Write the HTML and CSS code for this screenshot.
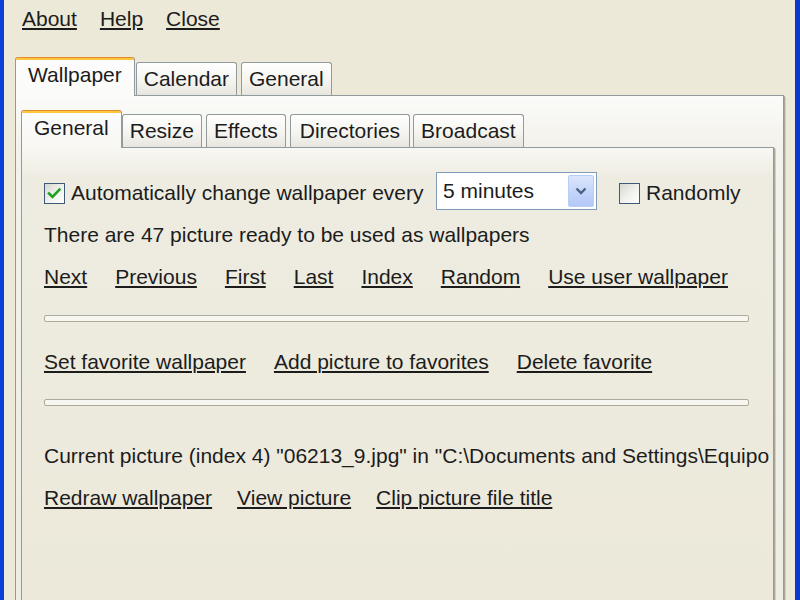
FILE: index.html
```html
<!DOCTYPE html>
<html>
<head>
<meta charset="utf-8">
<title>Wallpaper settings</title>
<link rel="stylesheet" href="styles.css">
</head>
<body>
<div class="window">
  <nav class="menu">
    <a class="link">About</a>
    <a class="link">Help</a>
    <a class="link">Close</a>
  </nav>
  <div class="outer">
    <div class="tabs outer-tabs">
      <div class="tab active">Wallpaper</div>
      <div class="tab">Calendar</div>
      <div class="tab">General</div>
    </div>
    <div class="panel outer-panel">
      <div class="tabs inner-tabs">
        <div class="tab active">General</div>
        <div class="tab">Resize</div>
        <div class="tab">Effects</div>
        <div class="tab wide">Directories</div>
        <div class="tab">Broadcast</div>
      </div>
      <div class="panel inner-panel">
        <div class="auto-row">
          <label class="check first">
            <span class="cb">
              <svg width="15" height="13" viewBox="0 0 15 13"><path d="M2 6.5 L5.5 10 L12.5 2.5" fill="none" stroke="#21A121" stroke-width="2.6" stroke-linecap="square"/></svg>
            </span>
            <span>Automatically change wallpaper every</span>
          </label>
          <div class="combo">
            <span>5 minutes</span>
            <span class="combo-btn">
              <svg width="12" height="8" viewBox="0 0 12 8"><path d="M1.5 1.5 L6 6 L10.5 1.5" fill="none" stroke="#4D6185" stroke-width="2.4"/></svg>
            </span>
          </div>
          <label class="check random">
            <span class="cb"></span>
            <span>Randomly</span>
          </label>
        </div>
        <div class="line info">There are 47 picture ready to be used as wallpapers</div>
        <div class="links l1">
          <a class="link">Next</a>
          <a class="link">Previous</a>
          <a class="link">First</a>
          <a class="link">Last</a>
          <a class="link">Index</a>
          <a class="link">Random</a>
          <a class="link">Use user wallpaper</a>
        </div>
        <div class="sep s1"></div>
        <div class="links l2">
          <a class="link">Set favorite wallpaper</a>
          <a class="link">Add picture to favorites</a>
          <a class="link">Delete favorite</a>
        </div>
        <div class="sep s2"></div>
        <div class="line current">Current picture (index 4) "06213_9.jpg" in "C:\Documents and Settings\Equipo</div>
        <div class="links l3">
          <a class="link">Redraw wallpaper</a>
          <a class="link">View picture</a>
          <a class="link">Clip picture file title</a>
        </div>
      </div>
    </div>
  </div>
</div>
</body>
</html>
```
FILE: styles.css
```css
* { box-sizing: border-box; }
html, body { margin: 0; padding: 0; height: 100%; overflow: hidden; }
body {
  background: #ECE9D8;
  font-family: "Liberation Sans", Arial, sans-serif;
  font-size: 21px;
  color: #1c1c1c;
}
.window {
  height: 600px;
  border-left: 4px solid #0B3FD8;
  border-right: 5px solid #0A3BD0;
  display: flex;
  flex-direction: column;
}
.menu {
  display: flex;
  gap: 23px;
  padding: 7px 0 0 18px;
  line-height: 24px;
}
.link {
  color: inherit;
  text-decoration: underline;
  text-decoration-thickness: 2px;
  text-underline-offset: 2px;
  white-space: nowrap;
  cursor: pointer;
}
.outer {
  flex: 1;
  margin: 26px 11px 0 11px;
  display: flex;
  flex-direction: column;
}
.tabs {
  display: flex;
  align-items: flex-end;
}
.outer-tabs { height: 38px; }
.inner-tabs { height: 37px; }
.tab {
  border: 1px solid #919B9C;
  border-bottom: none;
  border-radius: 3px 3px 0 0;
  background: linear-gradient(#FFFFFF, #F4F3EE 60%, #E6E5DE);
  padding: 4px 7px;
  line-height: 24px;
  white-space: nowrap;
}
.tab + .tab { margin-left: 4px; }
.tab.active + .tab { margin-left: 1px; }
.inner-tabs .tab.active + .tab { margin-left: 0; }
.inner-tabs .tab + .tab:last-child { margin-left: 3px; }
.tab.wide { padding: 4px 9px; }
.tab.active {
  border-top: none;
  padding: 6px 12px 9px;
  margin-bottom: -1px;
  position: relative;
  z-index: 1;
  background: linear-gradient(#E68B2C 0, #E68B2C 1px, #FFC73C 1px, #FFC73C 3px, #FCFCFE 3px, #FBFBF8);
}
.inner-tabs .tab.active {
  padding: 6px 12px 8px;
  background: linear-gradient(#E68B2C 0, #E68B2C 1px, #FFC73C 1px, #FFC73C 3px, #FCFCFE 3px, #F8F7F2);
}
.panel {
  border: 1px solid #919B9C;
  box-shadow: 1px 1px 0 #ACA899, 2px 2px 0 #D2CFC1;
}
.outer-panel {
  flex: 1;
  margin-bottom: -12px;
  padding: 14px 9px 0 5px;
  display: flex;
  flex-direction: column;
  background: linear-gradient(#FBFBF9, #F3F2EC 50px, #EEEDE4);
}
.inner-panel {
  flex: 1;
  margin-bottom: -12px;
  padding: 24px 24px 0 22px;
  overflow: hidden;
  background: linear-gradient(#F8F7F2, #EEECE1 30px, #ECE9DA);
}
.auto-row {
  display: flex;
  align-items: center;
  height: 38px;
}
.check {
  display: flex;
  align-items: center;
  gap: 6px;
  margin-top: 4px;
  line-height: 24px;
  white-space: nowrap;
}
.check.first { width: 392px; flex: none; }
.check.random { margin-left: 22px; }
.cb {
  width: 21px;
  height: 21px;
  flex: none;
  border: 1px solid #3E5A78;
  background: linear-gradient(135deg, #D8D8D2, #F2F2EE 55%, #FFFFFF);
  display: flex;
  align-items: center;
  justify-content: center;
}
.combo {
  width: 161px;
  height: 38px;
  flex: none;
  border: 1px solid #7F9DB9;
  background: #FFFFFF;
  display: flex;
  align-items: center;
  justify-content: space-between;
  padding: 0 2px 0 6px;
  line-height: 24px;
}
.combo-btn {
  width: 26px;
  height: 32px;
  border: 1px solid #B9CDF9;
  border-radius: 2px;
  background: linear-gradient(#DCE6FC, #C5D6FB 50%, #B4C8F6);
  display: flex;
  align-items: center;
  justify-content: center;
}
.line {
  line-height: 24px;
  white-space: nowrap;
}
.info { margin-top: 13px; }
.links {
  display: flex;
  line-height: 24px;
}
.l1 { gap: 28px; margin-top: 18px; }
.l2 { gap: 28px; margin-top: 28px; }
.l3 { gap: 25px; margin-top: 18px; }
.sep {
  height: 7px;
  border: 1px solid #ADAA9B;
  border-radius: 2px;
  background: #F7F6F1;
}
.s1 { margin-top: 26px; }
.s2 { margin-top: 25px; }
.current { margin-top: 38px; }
```
